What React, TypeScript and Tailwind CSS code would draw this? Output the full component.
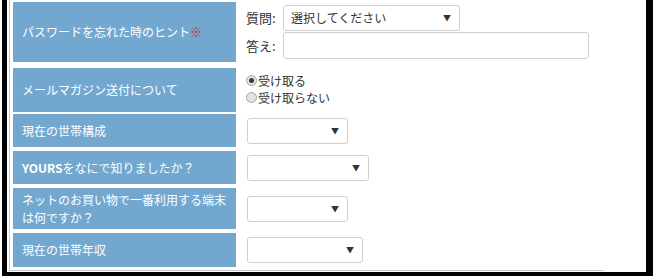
import React from "react";

const font = { fontFamily: '"Noto Sans CJK JP", "Noto Sans", sans-serif' };

interface SelectProps {
  width: string;
  text?: string;
}

const FakeSelect: React.FC<SelectProps> = ({ width, text = "" }) => (
  <div
    className={`${width} h-[26px] border border-[#cfcfcf] rounded-[3px] bg-white flex items-center justify-between pl-[7px] pr-[8px] text-[12px] text-[#333]`}
  >
    <span>{text}</span>
    <span className="text-[8px] text-[#333] leading-none">▼</span>
  </div>
);

const Radio: React.FC<{ checked?: boolean; label: string }> = ({ checked, label }) => (
  <div className="flex items-center h-[17px]">
    <span className="w-[11px] h-[11px] rounded-full border border-[#a5a5a5] bg-[#e2e2e2] flex items-center justify-center mr-[1px]">
      {checked && <span className="w-[5px] h-[5px] rounded-full bg-[#3a3a3a]" />}
    </span>
    <span className="text-[12px] text-[#333]">{label}</span>
  </div>
);

interface RowProps {
  h: string;
  mt: string;
  label: React.ReactNode;
  children: React.ReactNode;
}

const Row: React.FC<RowProps> = ({ h, mt, label, children }) => (
  <div className={`flex ${h} ${mt}`}>
    <div className="w-[223px] shrink-0 bg-[#72a8d0] flex items-center pl-[9px] pr-[8px] text-[12px] leading-[18px] text-white">
      <div>{label}</div>
    </div>
    <div className="flex-1 ml-[4px] pl-[7px] flex flex-col justify-center">{children}</div>
  </div>
);

const App: React.FC = () => {
  return (
    <div className="w-[653px] h-[280px] bg-white overflow-hidden" style={font}>
      <div className="ml-[2px] w-[651px] h-[276px] border-l-[5px] border-r-[7px] border-b-[4px] border-black bg-white">
        <div className="ml-[2px] w-[595px] h-[271px] border-l border-b border-[#c8c8c8] pl-[3px] pt-[2px]">
          <Row
            h="h-[60px]"
            mt="mt-0"
            label={
              <>
                パスワードを忘れた時のヒント<span className="text-[#d81e3c]">※</span>
              </>
            }
          >
            <div className="flex flex-col gap-[1px] -ml-[1px]">
              <div className="flex items-center">
                <span className="w-[37px] text-[13px] text-[#333]">質問:</span>
                <FakeSelect width="w-[177px]" text="選択してください" />
              </div>
              <div className="flex items-center">
                <span className="w-[37px] text-[13px] text-[#333]">答え:</span>
                <div className="w-[306px] h-[27px] border border-[#cfcfcf] rounded-[3px] bg-white" />
              </div>
            </div>
          </Row>
          <Row h="h-[44px]" mt="mt-[6px]" label="メールマガジン送付について">
            <div className="-ml-[1px] -mt-[2px]">
              <Radio checked label="受け取る" />
              <Radio label="受け取らない" />
            </div>
          </Row>
          <Row h="h-[33px]" mt="mt-[2px]" label="現在の世帯構成">
            <FakeSelect width="w-[101px]" />
          </Row>
          <Row
            h="h-[33px]"
            mt="mt-[4px]"
            label={
              <>
                <b>YOURS</b>をなにで知りましたか？
              </>
            }
          >
            <FakeSelect width="w-[122px]" />
          </Row>
          <Row h="h-[41px]" mt="mt-[4px]" label="ネットのお買い物で一番利用する端末は何ですか？">
            <FakeSelect width="w-[101px]" />
          </Row>
          <Row h="h-[34px]" mt="mt-[4px]" label="現在の世帯年収">
            <FakeSelect width="w-[116px]" />
          </Row>
        </div>
      </div>
    </div>
  );
};

export default App;
